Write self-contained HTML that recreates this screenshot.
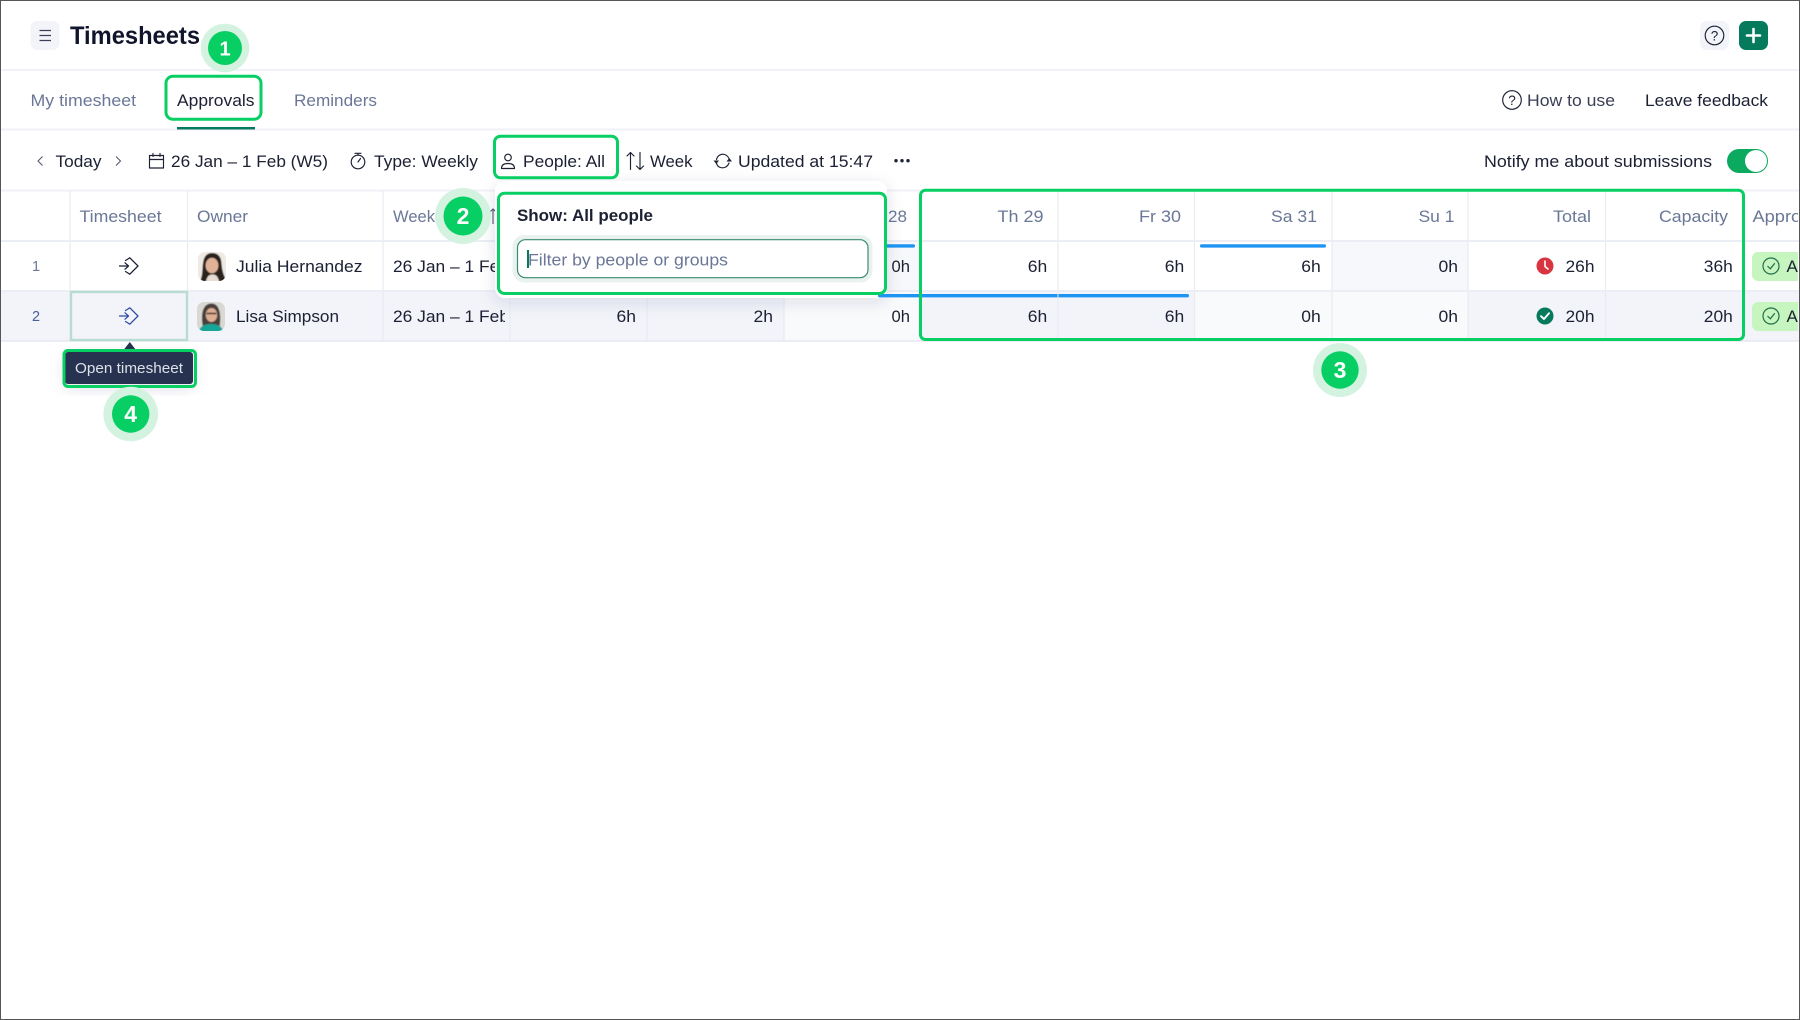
<!DOCTYPE html>
<html lang="en">
<head>
<meta charset="utf-8">
<title>Timesheets</title>
<style>
html,body{margin:0;padding:0;background:#fff;width:1800px;height:1020px;overflow:hidden}
svg{display:block}
text{font-family:"Liberation Sans",sans-serif;font-size:17px;fill:#1c2033}
.m{fill:#6b7797}
.b{font-weight:700}
.d{font-family:"Liberation Sans",sans-serif;font-weight:700;font-size:23px;fill:#fff;text-anchor:middle}
.g{fill:none;stroke:#08cf64;stroke-width:3}
.l{fill:none;stroke:#1c2033;stroke-width:1.15;stroke-linecap:round;stroke-linejoin:round}
.v{stroke:#e9ebf3;stroke-width:1.2}
.h{stroke:#f1f2f8;stroke-width:2}
.r{stroke:#eceef5;stroke-width:2}
</style>
</head>
<body>
<svg xmlns="http://www.w3.org/2000/svg" width="1800" height="1020" viewBox="0 0 1800 1020">
<defs>
<clipPath id="a1"><rect x="198" y="252" width="28" height="29" rx="7"/></clipPath>
<clipPath id="a2"><rect x="197" y="302" width="28" height="29" rx="7"/></clipPath>
<clipPath id="wk1"><rect x="384" y="242" width="113" height="48"/></clipPath>
<clipPath id="wk2"><rect x="384" y="292" width="121" height="48"/></clipPath>
<clipPath id="ap"><rect x="1744" y="190" width="54" height="155"/></clipPath>
<filter id="sh" x="-15%" y="-25%" width="130%" height="160%"><feDropShadow dx="0" dy="4" stdDeviation="8" flood-color="#28345a" flood-opacity=".13"/></filter>
<filter id="bl" x="-5%" y="-5%" width="110%" height="110%"><feGaussianBlur stdDeviation=".5"/></filter>
</defs>
<rect width="1800" height="1020" fill="#fff"/>

<!-- top bar -->
<rect x="30.500" y="21" width="29" height="29" rx="7" fill="#f3f4f9"/>
<path d="M39.500 30.500H51M39.500 35.500H51M39.500 40.500H51" fill="none" stroke="#3a4058" stroke-width="1.200"/>
<text x="70" y="44" textLength="130" lengthAdjust="spacingAndGlyphs" style="font-size:25px;font-weight:700;fill:#11152b">Timesheets</text>
<rect x="1700" y="21" width="29" height="29" rx="7" fill="#f3f4f9"/>
<circle cx="1714.500" cy="35.500" r="9.300" class="l"/>
<text x="1714.500" y="40.500" text-anchor="middle" style="font-size:13.500px">?</text>
<rect x="1739" y="21" width="29" height="29" rx="7" fill="#057a5c"/>
<path d="M1753.500 29V42M1747 35.500H1760" stroke="#fff" stroke-width="2.600" stroke-linecap="round"/>
<line x1="0" y1="70" x2="1800" y2="70" class="h"/>

<!-- tabs -->
<text x="30.500" y="106" textLength="105.500" lengthAdjust="spacingAndGlyphs" class="m">My timesheet</text>
<text x="177" y="106" textLength="77.500" lengthAdjust="spacingAndGlyphs">Approvals</text>
<text x="294" y="106" textLength="83" lengthAdjust="spacingAndGlyphs" class="m">Reminders</text>
<circle cx="1512" cy="100" r="9.300" class="l"/>
<text x="1512" y="105" text-anchor="middle" style="font-size:13.500px">?</text>
<text x="1527" y="106" textLength="88" lengthAdjust="spacingAndGlyphs" style="fill:#3a3f55">How to use</text>
<text x="1645" y="106" textLength="123" lengthAdjust="spacingAndGlyphs">Leave feedback</text>
<line x1="0" y1="129.500" x2="1800" y2="129.500" class="h"/>
<rect x="177" y="127" width="78" height="2.500" fill="#057a5c"/>

<!-- toolbar -->
<path d="M42.500 156.500L38 161L42.500 165.500M116 156.500L120.500 161L116 165.500" fill="none" stroke="#4c5268" stroke-width="1"/>
<text x="55.500" y="167" textLength="46" lengthAdjust="spacingAndGlyphs">Today</text>
<path d="M149.500 155.500H163.500V168H149.500ZM149.500 159.500H163.500M153 153.500V156.500M160 153.500V156.500" class="l"/>
<text x="171" y="167" textLength="157" lengthAdjust="spacingAndGlyphs">26 Jan – 1 Feb (W5)</text>
<circle cx="358" cy="162" r="6.800" class="l"/>
<path d="M355 153.300H361M358 153.300V155M358 162L360.500 158.500" class="l"/>
<text x="374" y="167" textLength="104" lengthAdjust="spacingAndGlyphs">Type: Weekly</text>
<circle cx="508" cy="157.500" r="3.300" class="l"/>
<path d="M501.500 168.500C501.500 164.800 504 163.500 508 163.500C512 163.500 514.500 164.800 514.500 168.500Z" class="l"/>
<text x="523" y="167" textLength="82" lengthAdjust="spacingAndGlyphs">People: All</text>
<path d="M630.500 169.500V152.500M627 156L630.500 152.500L634 156M640 152.500V169.500M636.500 166L640 169.500L643.500 166" class="l"/>
<text x="650" y="167" textLength="42.500" lengthAdjust="spacingAndGlyphs">Week</text>
<path d="M716.500 159.500C717.500 155.500 721 153.500 724.500 154.500C726.500 155 728 156.500 729 158.500M729 163C727.500 167 724 168.500 720.500 167.500C718.500 167 717 165.500 716.500 163" class="l"/>
<path d="M713.500 160.500H719L716.300 164ZM726.500 161.500H732L729.300 158Z" fill="#1c2033"/>
<text x="738" y="167" textLength="135" lengthAdjust="spacingAndGlyphs">Updated at 15:47</text>
<circle cx="896" cy="160.700" r="1.700" fill="#1c2033"/><circle cx="902" cy="160.700" r="1.700" fill="#1c2033"/><circle cx="908" cy="160.700" r="1.700" fill="#1c2033"/>
<text x="1484" y="167" textLength="228" lengthAdjust="spacingAndGlyphs">Notify me about submissions</text>
<rect x="1727" y="149" width="41" height="24" rx="12" fill="#0caa5e"/>
<circle cx="1756" cy="161" r="11" fill="#fff"/>
<line x1="0" y1="190.500" x2="1800" y2="190.500" class="h"/>

<!-- table backgrounds -->
<rect x="1" y="292" width="1798" height="49" fill="#f2f4fa"/>
<rect x="784" y="292" width="137" height="49" fill="#f9fafc"/>
<rect x="1194.500" y="292" width="273.500" height="49" fill="#f9fafc"/>
<rect x="1332" y="242" width="136" height="49" fill="#f7f8fb"/>
<rect x="784" y="242" width="137" height="49" fill="#f7f8fb"/>

<!-- grid -->
<line x1="70" y1="191" x2="70" y2="341" class="v"/>
<line x1="187.500" y1="191" x2="187.500" y2="341" class="v"/>
<line x1="383" y1="191" x2="383" y2="341" class="v"/>
<line x1="510" y1="191" x2="510" y2="341" class="v"/>
<line x1="647" y1="191" x2="647" y2="341" class="v"/>
<line x1="784" y1="191" x2="784" y2="341" class="v"/>
<line x1="921" y1="191" x2="921" y2="341" class="v"/>
<line x1="1058" y1="191" x2="1058" y2="341" class="v"/>
<line x1="1194.500" y1="191" x2="1194.500" y2="341" class="v"/>
<line x1="1332" y1="191" x2="1332" y2="341" class="v"/>
<line x1="1468" y1="191" x2="1468" y2="341" class="v"/>
<line x1="1605.500" y1="191" x2="1605.500" y2="341" class="v"/>
<line x1="1743" y1="191" x2="1743" y2="341" class="v"/>
<line x1="0" y1="241" x2="1800" y2="241" class="r"/>
<line x1="0" y1="291" x2="1800" y2="291" class="r"/>
<line x1="0" y1="341" x2="1800" y2="341" stroke="#e6e8f0" stroke-width="1.400"/>

<!-- header labels -->
<text x="79.500" y="222" textLength="82" lengthAdjust="spacingAndGlyphs" class="m">Timesheet</text>
<text x="197" y="222" textLength="51" lengthAdjust="spacingAndGlyphs" class="m">Owner</text>
<text x="393" y="222" textLength="42" lengthAdjust="spacingAndGlyphs" class="m">Week</text>
<path d="M493 224V209M489.500 212.500L493 209L496.500 212.500" fill="none" stroke="#5a6178" stroke-width="1.200"/>
<text x="888" y="222" textLength="19" lengthAdjust="spacingAndGlyphs" class="m">28</text>
<text x="997.500" y="222" textLength="46" lengthAdjust="spacingAndGlyphs" class="m">Th 29</text>
<text x="1139" y="222" textLength="42" lengthAdjust="spacingAndGlyphs" class="m">Fr 30</text>
<text x="1271" y="222" textLength="46" lengthAdjust="spacingAndGlyphs" class="m">Sa 31</text>
<text x="1418.500" y="222" textLength="36" lengthAdjust="spacingAndGlyphs" class="m">Su 1</text>
<text x="1553" y="222" textLength="38" lengthAdjust="spacingAndGlyphs" class="m">Total</text>
<text x="1659" y="222" textLength="69" lengthAdjust="spacingAndGlyphs" class="m">Capacity</text>
<g clip-path="url(#ap)"><text x="1752.500" y="222" textLength="72" lengthAdjust="spacingAndGlyphs" class="m">Approval</text></g>

<!-- row 1 -->
<text x="36" y="271" text-anchor="middle" class="m" style="font-size:14.500px">1</text>
<g fill="none" stroke="#1c2033" stroke-width="1.250" stroke-linecap="round" stroke-linejoin="round">
<path d="M125.500 260.500L129.800 257.800L138 266L129.800 274.200L125.500 271.500"/>
<path d="M119.500 266H128.500M125 262.800L128.500 266L125 269.200"/>
</g>
<g clip-path="url(#a1)"><g filter="url(#bl)">
<rect x="196" y="250" width="32" height="33" fill="#efeae4"/>
<path d="M199 283C203 277 202 270 203 263C204 256 207 253 212 253C218 253 221 256.500 221.500 263C222 270 223 275 228 283Z" fill="#2c211c"/>
<ellipse cx="212" cy="265.500" rx="6.400" ry="7.800" fill="#e2b298"/>
<path d="M205.500 283C207 276 209 274.500 212.500 274.500C216 274.500 218 276 219.500 283Z" fill="#e8ddd2"/>
</g></g>
<text x="236" y="272" textLength="126.500" lengthAdjust="spacingAndGlyphs">Julia Hernandez</text>
<g clip-path="url(#wk1)"><text x="393" y="272" textLength="116" lengthAdjust="spacingAndGlyphs">26 Jan – 1 Feb</text></g>
<text x="891.500" y="272" textLength="18.500" lengthAdjust="spacingAndGlyphs">0h</text>
<text x="1027.800" y="272" textLength="19.500" lengthAdjust="spacingAndGlyphs">6h</text>
<text x="1164.800" y="272" textLength="19.500" lengthAdjust="spacingAndGlyphs">6h</text>
<text x="1301.300" y="272" textLength="19.500" lengthAdjust="spacingAndGlyphs">6h</text>
<text x="1438.500" y="272" textLength="19.500" lengthAdjust="spacingAndGlyphs">0h</text>
<circle cx="1545" cy="266" r="8.500" fill="#d93541"/>
<path d="M1545 261V266.500L1548 269" fill="none" stroke="#fff" stroke-width="1.600" stroke-linecap="round"/>
<text x="1565.500" y="272" textLength="29" lengthAdjust="spacingAndGlyphs">26h</text>
<text x="1703.800" y="272" textLength="29" lengthAdjust="spacingAndGlyphs">36h</text>

<!-- row 2 -->
<text x="36" y="321" text-anchor="middle" style="font-size:14.500px;fill:#4a5d9a">2</text>
<rect x="71" y="292" width="116" height="48" fill="none" stroke="#b9dcd2" stroke-width="2.400"/>
<g fill="none" stroke="#2e4ba3" stroke-width="1.250" stroke-linecap="round" stroke-linejoin="round">
<path d="M125.500 310.500L129.800 307.800L138 316L129.800 324.200L125.500 321.500"/>
<path d="M119.500 316H128.500M125 312.800L128.500 316L125 319.200"/>
</g>
<g clip-path="url(#a2)"><g filter="url(#bl)">
<rect x="195" y="300" width="32" height="33" fill="#d9d8d3"/>
<path d="M203 327C201 318 201 303.500 211.500 303.500C221 303.500 221 318 219.500 327Z" fill="#4a413a"/>
<ellipse cx="211.500" cy="315" rx="5.700" ry="7" fill="#dcae94"/>
<path d="M206.500 313.500H216.500" stroke="#3a302a" stroke-width="1.500"/>
<path d="M198 333C200 325.500 205 324 211 324C217 324 222 325.500 224 333Z" fill="#14a596"/>
</g></g>
<text x="236" y="322" textLength="103" lengthAdjust="spacingAndGlyphs">Lisa Simpson</text>
<g clip-path="url(#wk2)"><text x="393" y="322" textLength="116" lengthAdjust="spacingAndGlyphs">26 Jan – 1 Feb</text></g>
<text x="616.500" y="322" textLength="19.500" lengthAdjust="spacingAndGlyphs">6h</text>
<text x="753.500" y="322" textLength="19.500" lengthAdjust="spacingAndGlyphs">2h</text>
<text x="891.500" y="322" textLength="18.500" lengthAdjust="spacingAndGlyphs">0h</text>
<text x="1027.800" y="322" textLength="19.500" lengthAdjust="spacingAndGlyphs">6h</text>
<text x="1164.800" y="322" textLength="19.500" lengthAdjust="spacingAndGlyphs">6h</text>
<text x="1301.300" y="322" textLength="19.500" lengthAdjust="spacingAndGlyphs">0h</text>
<text x="1438.500" y="322" textLength="19.500" lengthAdjust="spacingAndGlyphs">0h</text>
<circle cx="1545" cy="316" r="8.500" fill="#057a5c"/>
<path d="M1541 316.200L1544 319L1549 313.200" fill="none" stroke="#fff" stroke-width="1.900" stroke-linecap="round" stroke-linejoin="round"/>
<text x="1565.500" y="322" textLength="29" lengthAdjust="spacingAndGlyphs">20h</text>
<text x="1703.800" y="322" textLength="29" lengthAdjust="spacingAndGlyphs">20h</text>

<!-- timeline bars (row 1) -->
<rect x="860" y="244.300" width="55" height="3.300" rx="1.600" fill="#1e95f2"/>
<rect x="1200" y="244.300" width="126" height="3.300" rx="1.600" fill="#1e95f2"/>

<!-- approval pills -->
<g clip-path="url(#ap)">
<rect x="1752" y="252" width="70" height="29" rx="6" fill="#c7f5bf"/>
<rect x="1752" y="302" width="70" height="29" rx="6" fill="#c7f5bf"/>
<circle cx="1771" cy="266" r="8" fill="none" stroke="#1f6f4a" stroke-width="1.200"/>
<path d="M1767.500 266L1770.300 268.800L1774.800 263.200" fill="none" stroke="#1f6f4a" stroke-width="1.200"/>
<circle cx="1771" cy="316" r="8" fill="none" stroke="#1f6f4a" stroke-width="1.200"/>
<path d="M1767.500 316L1770.300 318.800L1774.800 313.200" fill="none" stroke="#1f6f4a" stroke-width="1.200"/>
<text x="1786.500" y="272" style="font-size:17px">Approved</text>
<text x="1786.500" y="322" style="font-size:17px">Approved</text>
</g>

<!-- popup -->
<rect x="495" y="181" width="392" height="117" rx="10" fill="#fff" filter="url(#sh)"/>
<text x="517" y="221" textLength="136" lengthAdjust="spacingAndGlyphs" class="b">Show: All people</text>
<rect x="512.500" y="235" width="360" height="47.500" rx="12" fill="#e9f2ef"/>
<rect x="517.500" y="239.700" width="350.500" height="38" rx="8" fill="#fff" stroke="#3a8b73" stroke-width="1.200"/>
<text x="528" y="265.500" textLength="200" lengthAdjust="spacingAndGlyphs" class="m">Filter by people or groups</text>
<rect x="527" y="250" width="2" height="18" fill="#057a5c"/>

<!-- row 2 timeline bar -->
<rect x="878" y="294" width="311" height="3.400" rx="1.600" fill="#1e95f2"/>
<rect x="1057.500" y="294" width="1" height="3.400" fill="#dcecf9"/>

<!-- tooltip -->
<path d="M122 352L129.800 342L137.500 352Z" fill="#26324f"/>
<rect x="65" y="352" width="128" height="32" rx="3" fill="#26324f" filter="url(#sh)"/>
<text x="75" y="373" textLength="108" lengthAdjust="spacingAndGlyphs" style="font-size:14.500px;fill:#dde1ea">Open timesheet</text>

<!-- highlight frames -->
<rect x="166" y="76.200" width="95" height="43" rx="7" class="g"/>
<rect x="494.500" y="136.200" width="123" height="41.600" rx="6" class="g"/>
<rect x="498.500" y="193.200" width="387" height="100.300" rx="6" class="g"/>
<rect x="920.500" y="190.200" width="823" height="149.300" rx="5" class="g"/>
<rect x="64" y="350.500" width="131.500" height="36" rx="4" class="g"/>

<!-- numbered badges -->
<circle cx="225" cy="48" r="24.300" fill="#d3f3e0"/><circle cx="225" cy="48" r="17" fill="#08cf64"/>
<text x="225" y="55.500" class="d" style="font-size:20px">1</text>
<circle cx="463" cy="216" r="28" fill="#d3f3e0"/><circle cx="463" cy="216" r="19.500" fill="#08cf64"/>
<text x="463" y="224" class="d">2</text>
<circle cx="1340" cy="370" r="27" fill="#d3f3e0"/><circle cx="1340" cy="370" r="18.700" fill="#08cf64"/>
<text x="1340" y="378" class="d">3</text>
<circle cx="130.700" cy="414" r="27.300" fill="#d3f3e0"/><circle cx="130.700" cy="414" r="18.700" fill="#08cf64"/>
<text x="130.700" y="422" class="d">4</text>

<!-- outer frame -->
<rect x="0.500" y="0.500" width="1799" height="1019" fill="none" stroke="#555" stroke-width="1"/>
</svg>
</body>
</html>
